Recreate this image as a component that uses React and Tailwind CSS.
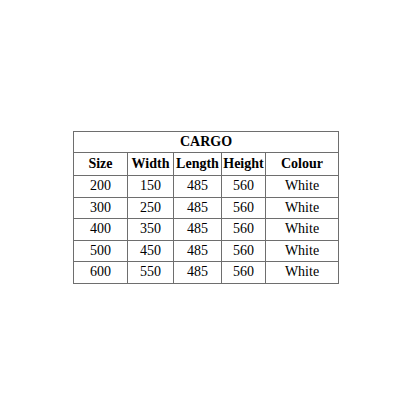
export default function App() {
  const rows = [
    ["200", "150", "485", "560", "White"],
    ["300", "250", "485", "560", "White"],
    ["400", "350", "485", "560", "White"],
    ["500", "450", "485", "560", "White"],
    ["600", "550", "485", "560", "White"],
  ];
  const widths = ["w-[54px]", "w-[46px]", "w-[48px]", "w-[44px]", "w-[73px]"];
  return (
    <div className="w-[416px] h-[416px] bg-white pl-[73px] pt-[131px]" style={{ fontFamily: '"Liberation Serif", "Times New Roman", serif' }}>
      <table className="border-collapse text-black text-[14px] leading-none table-fixed w-[265px]">
        <colgroup>
          {widths.map((w, i) => (
            <col key={i} className={w} />
          ))}
        </colgroup>
        <tbody>
          <tr className="h-[21px]">
            <td colSpan={5} className="border border-[#6e6e6e] text-center font-bold p-0">CARGO</td>
          </tr>
          <tr className="h-[23px]">
            {["Size", "Width", "Length", "Height", "Colour"].map((h) => (
              <td key={h} className="border border-[#6e6e6e] text-center font-bold p-0">{h}</td>
            ))}
          </tr>
          {rows.map((r, i) => (
            <tr key={i} className="h-[21.5px]">
              {r.map((c, j) => (
                <td key={j} className="border border-[#6e6e6e] text-center p-0">{c}</td>
              ))}
            </tr>
          ))}
        </tbody>
      </table>
    </div>
  );
}
